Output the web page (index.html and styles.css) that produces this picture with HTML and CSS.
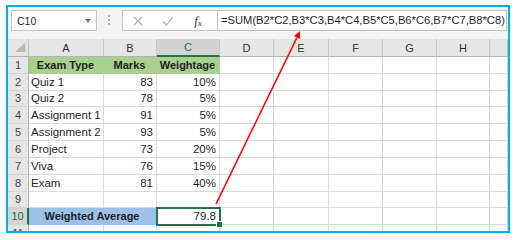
FILE: index.html
```html
<!DOCTYPE html>
<html lang="en">
<head>
  <meta charset="UTF-8">
  <title>Weighted Average</title>
  <link rel="stylesheet" href="styles.css">
</head>
<body>
  <div class="frame">
    <div class="formula-bar">
      <div class="name-box"><span>C10</span><span class="drop"></span></div>
      <div class="grip"><i></i><i></i><i></i></div>
      <div class="fx-buttons">
        <span class="slot"><svg width="10" height="10" viewBox="0 0 10 10"><path d="M1 1L9 9M9 1L1 9" stroke="#a8a8a8" stroke-width="1.1" fill="none"/></svg></span>
        <span class="slot"><svg width="12" height="10" viewBox="0 0 12 10"><path d="M1 5.5L4.5 9L11 1" stroke="#a8a8a8" stroke-width="1.1" fill="none"/></svg></span>
        <span class="slot fx"><i>f</i><small>x</small></span>
      </div>
      <div class="formula">=SUM(B2*C2,B3*C3,B4*C4,B5*C5,B6*C6,B7*C7,B8*C8)</div>
    </div>

    <div class="sheet">
      <div class="corner"><span></span></div>
      <div class="ch">A</div><div class="ch">B</div><div class="ch sel">C</div><div class="ch">D</div>
      <div class="ch">E</div><div class="ch">F</div><div class="ch">G</div><div class="ch">H</div><div class="ch"></div>

      <div class="rh">1</div>
      <div class="c hd">Exam Type</div><div class="c hd">Marks</div><div class="c hd">Weightage</div>
      <div class="c"></div><div class="c"></div><div class="c"></div><div class="c"></div><div class="c"></div><div class="c"></div>

      <div class="rh">2</div>
      <div class="c">Quiz 1</div><div class="c num">83</div><div class="c num">10%</div>
      <div class="c"></div><div class="c"></div><div class="c"></div><div class="c"></div><div class="c"></div><div class="c"></div>

      <div class="rh">3</div>
      <div class="c">Quiz 2</div><div class="c num">78</div><div class="c num">5%</div>
      <div class="c"></div><div class="c"></div><div class="c"></div><div class="c"></div><div class="c"></div><div class="c"></div>

      <div class="rh">4</div>
      <div class="c">Assignment 1</div><div class="c num">91</div><div class="c num">5%</div>
      <div class="c"></div><div class="c"></div><div class="c"></div><div class="c"></div><div class="c"></div><div class="c"></div>

      <div class="rh">5</div>
      <div class="c">Assignment 2</div><div class="c num">93</div><div class="c num">5%</div>
      <div class="c"></div><div class="c"></div><div class="c"></div><div class="c"></div><div class="c"></div><div class="c"></div>

      <div class="rh">6</div>
      <div class="c">Project</div><div class="c num">73</div><div class="c num">20%</div>
      <div class="c"></div><div class="c"></div><div class="c"></div><div class="c"></div><div class="c"></div><div class="c"></div>

      <div class="rh">7</div>
      <div class="c">Viva</div><div class="c num">76</div><div class="c num">15%</div>
      <div class="c"></div><div class="c"></div><div class="c"></div><div class="c"></div><div class="c"></div><div class="c"></div>

      <div class="rh">8</div>
      <div class="c">Exam</div><div class="c num">81</div><div class="c num">40%</div>
      <div class="c"></div><div class="c"></div><div class="c"></div><div class="c"></div><div class="c"></div><div class="c"></div>

      <div class="rh">9</div>
      <div class="c"></div><div class="c"></div><div class="c"></div>
      <div class="c"></div><div class="c"></div><div class="c"></div><div class="c"></div><div class="c"></div><div class="c"></div>

      <div class="rh sel">10</div>
      <div class="c avg">Weighted Average</div><div class="c num pick">79.8</div>
      <div class="c"></div><div class="c"></div><div class="c"></div><div class="c"></div><div class="c"></div><div class="c"></div>

      <div class="rh">11</div>
      <div class="c"></div><div class="c"></div><div class="c"></div>
      <div class="c"></div><div class="c"></div><div class="c"></div><div class="c"></div><div class="c"></div><div class="c"></div>
    </div>

    <svg class="arrow" width="500" height="224" viewBox="0 0 500 224">
      <line x1="208" y1="197" x2="289" y2="30.5" stroke="#ff0000" stroke-width="1.6"/>
      <polygon points="292,24 292,32 286,29" fill="#ff0000"/>
    </svg>
  </div>
</body>
</html>
```

FILE: styles.css
```css
body { margin: 0; background: #fff; font-family: "Liberation Sans", Arial, sans-serif; color: #1f1f1f; }

.frame { position: relative; margin: 5px 0 0 6px; width: 500px; height: 224px; border: 2px solid #00b0f0; overflow: hidden; background: #fff; }

/* formula bar */
.formula-bar { display: flex; align-items: flex-start; height: 32px; padding-top: 3px; box-sizing: border-box; background: #f3f3f3; }
.name-box { display: flex; align-items: center; justify-content: space-between; margin-left: 3px; width: 86px; height: 21px; padding: 0 5px; box-sizing: border-box; background: #fff; border: 1px solid #c6c6c6; font-size: 10.5px; }
.drop { width: 0; height: 0; border-left: 3px solid transparent; border-right: 3px solid transparent; border-top: 4px solid #777; }
.grip { display: flex; flex-direction: column; gap: 2px; margin: 5px 0 0 11px; }
.grip i { width: 2px; height: 2px; background: #b4b4b4; }
.fx-buttons { display: flex; margin-left: 12px; height: 21px; width: 95px; box-sizing: border-box; background: #fff; border: 1px solid #c6c6c6; border-right: none; }
.slot { display: flex; align-items: center; justify-content: center; width: 30px; }
.fx { font-family: "Liberation Serif", serif; font-style: italic; color: #333; font-size: 13px; }
.fx i { font-style: italic; }
.fx small { font-size: 9px; margin-top: 4px; }
.formula { flex: 1; margin-right: 1px; height: 21px; box-sizing: border-box; padding-left: 3px; background: #fff; border: 1px solid #c6c6c6; font-size: 11.2px; line-height: 19px; white-space: nowrap; overflow: hidden; }

/* grid */
.sheet { display: grid; height: 192px; overflow: hidden; font-size: 11.5px;
  grid-template-columns: 21px 75px 53px 63px 54px 55px 54px 54px 53px 18px;
  grid-template-rows: 18px 17px 17px 16px 17px 17px 17px 17px 17px 16px 17px 17px; }
.sheet > div { box-sizing: border-box; }

.corner { display: flex; justify-content: flex-end; align-items: flex-end; padding: 0 3px 4px 0; background: #e6e6e6; border-right: 1px solid #c4c4c4; border-bottom: 1px solid #b4b4b4; }
.corner span { width: 0; height: 0; border-left: 10px solid transparent; border-bottom: 9px solid #b7b7b7; }

.ch { display: flex; align-items: center; justify-content: center; background: #e6e6e6; border-right: 1px solid #c8c8c8; border-bottom: 1px solid #b4b4b4; color: #333; font-size: 11px; }
.ch.sel { background: #d2d2d2; border-bottom: 2px solid #217346; color: #217346; }

.rh { display: flex; align-items: flex-end; justify-content: center; padding-bottom: 1px; line-height: 13px; background: #e6e6e6; border-right: 1px solid #b4b4b4; border-bottom: 1px solid #d4d4d4; color: #444; font-size: 11px; }
.rh.sel { background: #d2d2d2; border-right: 2px solid #217346; color: #217346; }

.c { display: flex; align-items: flex-end; padding: 0 3px 1px 2px; line-height: 13px; white-space: nowrap; overflow: hidden; border-right: 1px solid #dadada; border-bottom: 1px solid #dadada; }
.c.num { justify-content: flex-end; }
.c.hd { justify-content: center; font-weight: bold; font-size: 11px; background: #a9d08e; border-color: #a9d08e; }
.c.avg { grid-column: span 2; justify-content: center; font-weight: bold; font-size: 11px; background: #9bc2e6; border-color: #9bc2e6; }
.c.pick { position: relative; overflow: visible; outline: 2px solid #217346; outline-offset: -1px; }
.c.pick::after { content: ""; position: absolute; right: -4px; bottom: -4px; width: 5px; height: 5px; background: #217346; border: 1px solid #fff; }

.arrow { position: absolute; top: 0; left: 0; pointer-events: none; }
```
